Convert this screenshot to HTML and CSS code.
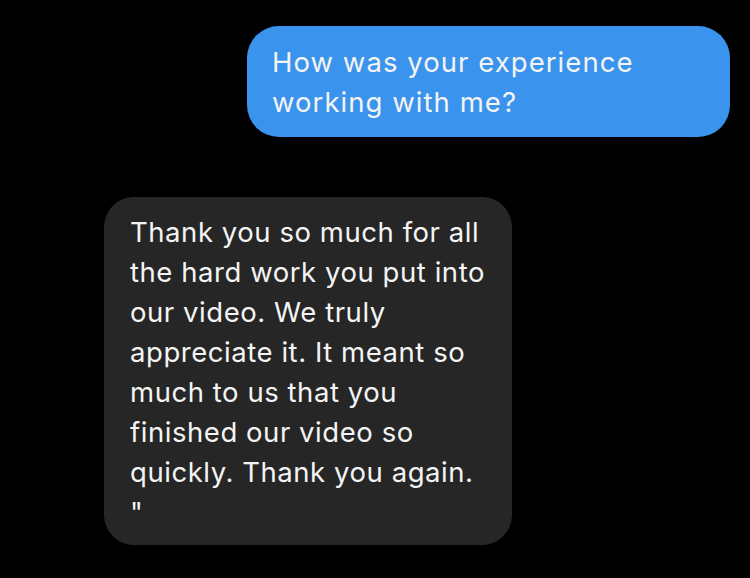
FILE: index.html
```html
<!DOCTYPE html>
<html>
<head>
<meta charset="utf-8">
<link rel="stylesheet" href="styles.css">
</head>
<body>
<div class="chat">
  <div class="bubble sent">How was your experience<br>working with me?</div>
  <div class="bubble received">Thank you so much for all<br>the hard work you put into<br>our video. We truly<br>appreciate it. It meant so<br>much to us that you<br>finished our video so<br>quickly. Thank you again.<br>"</div>
</div>
</body>
</html>
```
FILE: styles.css
```css
html, body {
  margin: 0;
  padding: 0;
  background: #000;
}
.chat {
  width: 750px;
  height: 578px;
  display: flex;
  flex-direction: column;
  align-items: flex-start;
  padding-top: 26px;
  box-sizing: border-box;
  font-family: Inter, "Liberation Sans", Arial, sans-serif;
}
.bubble {
  box-sizing: border-box;
  color: #f4f4f4;
  font-size: 27.5px;
  line-height: 40px;
  white-space: nowrap;
}
.sent {
  margin-left: 247px;
  width: 483px;
  height: 111px;
  padding: 16px 25px 15px;
  background: #3a93ec;
  border-radius: 32px;
  letter-spacing: 1.05px;
}
.received {
  margin-top: 60px;
  margin-left: 104px;
  width: 408px;
  height: 348px;
  padding: 15px 26px 13px;
  background: #262626;
  border-radius: 30px;
  letter-spacing: 0.55px;
}
```
